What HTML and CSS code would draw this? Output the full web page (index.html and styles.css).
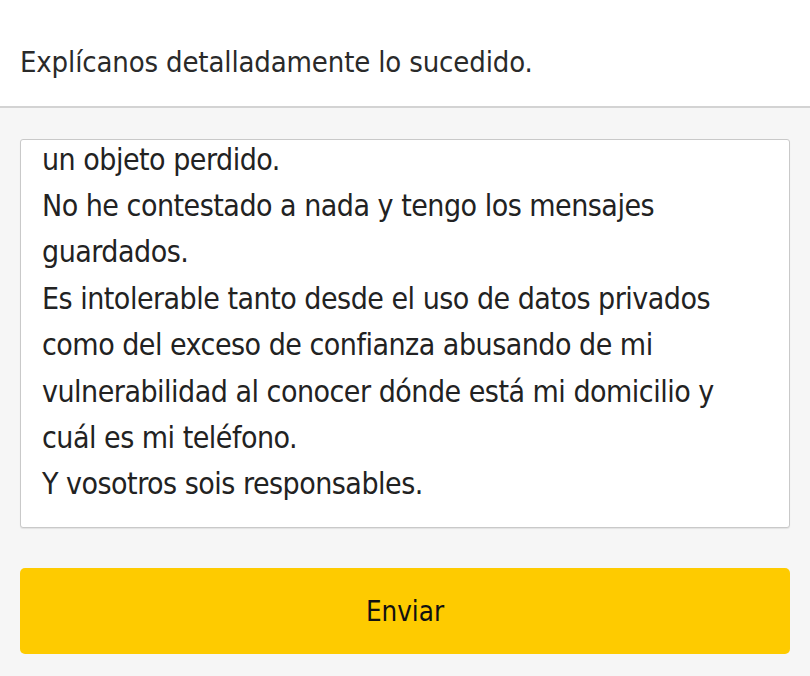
FILE: index.html
```html
<!DOCTYPE html>
<html lang="es">
<head>
<meta charset="utf-8">
<link rel="stylesheet" href="styles.css">
</head>
<body>
<header class="header">
  <h1 class="title">Explícanos detalladamente lo sucedido.</h1>
</header>
<main class="content">
  <div class="textbox">
    <div class="text">un objeto perdido.<br>No he contestado a nada y tengo los mensajes<br>guardados.<br>Es intolerable tanto desde el uso de datos privados<br>como del exceso de confianza abusando de mi<br>vulnerabilidad al conocer dónde está mi domicilio y<br>cuál es mi teléfono.<br>Y vosotros sois responsables.</div>
  </div>
  <button class="send">Enviar</button>
</main>
</body>
</html>
```
FILE: styles.css
```css
html, body {
  margin: 0;
  padding: 0;
}
body {
  background: #f6f6f6;
  width: 810px;
  height: 676px;
  overflow: hidden;
  color: #222;
}
.header {
  background: #fff;
  height: 106px;
  border-bottom: 2px solid #d3d3d3;
  padding: 0 20px;
}
.title {
  margin: 0;
  padding-top: 44px;
  font-family: "DejaVu Sans Condensed", "DejaVu Sans", sans-serif;
  font-weight: 400;
  font-size: 29px;
  letter-spacing: -0.15px;
  line-height: 36px;
  color: #2a2a2a;
  white-space: nowrap;
}
.content {
  padding: 31px 20px 0;
  display: flex;
  flex-direction: column;
  gap: 40px;
}
.textbox {
  height: 387px;
  background: #fff;
  border: 1px solid #c9c9c9;
  border-radius: 3px;
  box-shadow: 0 1px 1px rgba(0,0,0,0.08);
  padding: 0 20px 0 21px;
  overflow: hidden;
}
.text {
  margin-top: -3.5px;
  font-family: "DejaVu Sans Condensed", "DejaVu Sans", sans-serif;
  font-size: 30px;
  letter-spacing: -0.5px;
  line-height: 46.4px;
  white-space: nowrap;
  color: #222;
}
.send {
  height: 86px;
  border: none;
  border-radius: 5px;
  background: #fecb00;
  font-family: "DejaVu Sans Condensed", "DejaVu Sans", sans-serif;
  font-size: 27.5px;
  color: #111;
  padding: 0;
}
```
